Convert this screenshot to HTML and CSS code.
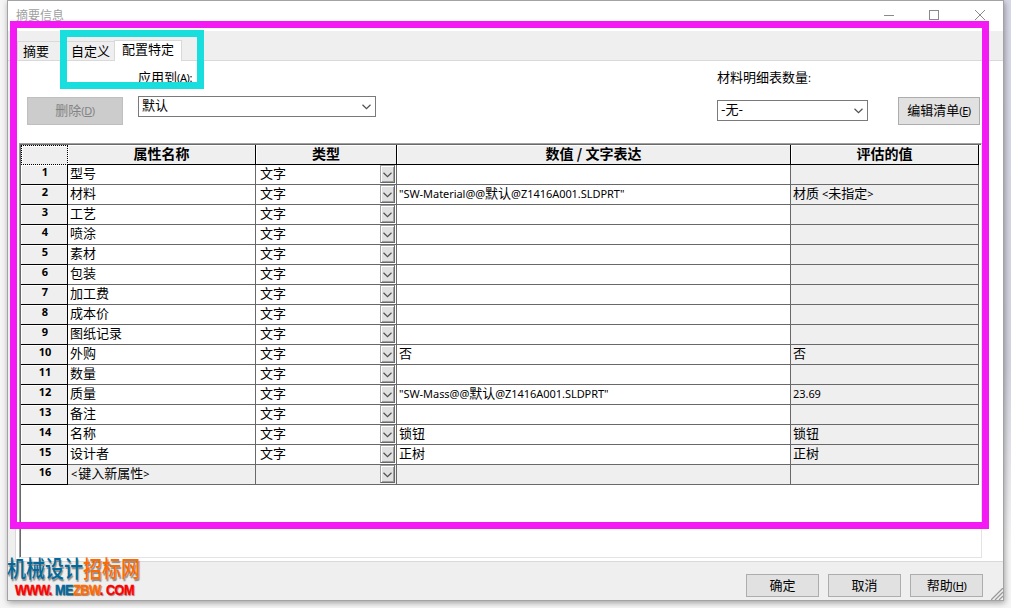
FILE: index.html
```html
<!DOCTYPE html>
<html lang="zh-CN">

<head>
  <meta charset="UTF-8">
  <title>摘要信息</title>
  <link rel="stylesheet" href="styles.css">
</head>

<body>
  <svg width="0" height="0" class="defs">
    <symbol id="chevron" viewBox="0 0 9 6">
      <path d="M0.5 0.8 L4.5 4.6 L8.5 0.8" fill="none" stroke="#505050" stroke-width="1.2" />
    </symbol>
  </svg>

  <div class="window">
    <div class="titlebar">
      <span class="title">摘要信息</span>
      <svg class="controls" width="104" height="12" viewBox="0 0 104 12" fill="none" stroke="#8a8a8a">
        <path d="M1 6.5 H11" />
        <rect x="46.5" y="1.5" width="9" height="9" />
        <path d="M92 1 L102 11 M102 1 L92 11" />
      </svg>
    </div>

    <div class="tabs">
      <div class="tab first">摘要</div>
      <div class="tab second">自定义</div>
      <div class="tab active">配置特定</div>
    </div>

    <div class="panel">
      <div class="toolbar">
        <button class="btn delete" disabled>删除<span class="key">(<u>D</u>)</span></button>
        <div class="field apply">
          <label>应用到<span class="key">(<u>A</u>):</span></label>
          <div class="select"><span>默认</span><svg width="9" height="6"><use href="#chevron" /></svg></div>
        </div>
        <div class="field bom">
          <label>材料明细表数量<span class="key">:</span></label>
          <div class="select"><span>-无-</span><svg width="9" height="6"><use href="#chevron" /></svg></div>
        </div>
        <button class="btn edit">编辑清单<span class="key">(<u>E</u>)</span></button>
      </div>

      <div class="sheet">
        <table>
          <colgroup>
            <col class="c-num">
            <col class="c-name">
            <col class="c-type">
            <col class="c-value">
            <col class="c-eval">
          </colgroup>
          <thead>
            <tr>
              <th class="corner"></th>
              <th>属性名称</th>
              <th>类型</th>
              <th>数值 / 文字表达</th>
              <th>评估的值</th>
            </tr>
          </thead>
          <tbody id="rows"></tbody>
        </table>
      </div>
    </div>

    <div class="footer">
      <button class="btn">确定</button>
      <button class="btn">取消</button>
      <button class="btn">帮助<span class="key">(<u>H</u>)</span></button>
      <svg class="grip" width="12" height="12" viewBox="0 0 12 12" stroke="#9a9a9a" stroke-width="1.3">
        <path d="M0 12 L12 0 M4 12 L12 4 M8 12 L12 8" />
      </svg>
    </div>
  </div>

  <div class="mark mark-page"></div>
  <div class="mark mark-tabs"></div>

  <div class="watermark">
    <div class="site"><span class="blue">机械设计</span><span class="orange">招标网</span></div>
    <div class="url"><span class="red">WWW. </span><span class="blue">ME</span><span class="orange">ZBW</span><span class="red">. COM</span></div>
  </div>

  <script>
    const rows = [
      ['型号', '', ''],
      ['材料', '<span class="lat">"SW-Material@@</span>默认<span class="lat">@Z1416A001.SLDPRT"</span>', '材质 <span class="lat">&lt;</span>未指定<span class="lat">&gt;</span>'],
      ['工艺', '', ''],
      ['喷涂', '', ''],
      ['素材', '', ''],
      ['包装', '', ''],
      ['加工费', '', ''],
      ['成本价', '', ''],
      ['图纸记录', '', ''],
      ['外购', '否', '否'],
      ['数量', '', ''],
      ['质量', '<span class="lat">"SW-Mass@@</span>默认<span class="lat">@Z1416A001.SLDPRT"</span>', '<span class="lat">23.69</span>'],
      ['备注', '', ''],
      ['名称', '锁钮', '锁钮'],
      ['设计者', '正树', '正树'],
      ['<span class="lat angle">&lt;</span>键入新属性<span class="lat">&gt;</span>', '', '']
    ];

    const drop = '<span class="drop"><svg width="9" height="6"><use href="#chevron" /></svg></span>';

    document.getElementById('rows').innerHTML = rows.map((r, i) => {
      const last = i === rows.length - 1;
      return `<tr class="${last ? 'new' : ''}">
        <th>${i + 1}</th>
        <td>${r[0]}</td>
        <td><div class="type"><span>${last ? '' : '文字'}</span>${drop}</div></td>
        <td>${r[1]}</td>
        <td class="eval">${r[2]}</td>
      </tr>`;
    }).join('');
  </script>
</body>

</html>
```
FILE: styles.css
```css
* {
  box-sizing: border-box;
}

body {
  margin: 0;
  height: 608px;
  overflow: hidden;
  background: linear-gradient(to bottom, #d9dae8 0, #d3d4df 60%, #f6f6f6 90%);
  font-family: "Noto Sans CJK SC", "Noto Sans", sans-serif;
  font-size: 13px;
  line-height: 19px;
  color: #000;
}

body::before {
  content: "";
  position: absolute;
  width: 7px;
  height: 608px;
  background: #f5f5f6;
}

.defs {
  position: absolute;
}

.window {
  position: relative;
  display: flex;
  flex-direction: column;
  width: 997px;
  height: 601px;
  margin-left: 7px;
  border: 1px solid #a3a3a5;
  background: #fff;
  box-shadow: 1px 2px 6px rgba(0, 0, 0, 0.35);
}

.titlebar {
  display: flex;
  justify-content: space-between;
  height: 30px;
  padding: 5px 16px 0 8px;
}

.title {
  font-size: 12px;
  line-height: 18px;
  color: #a0a0a0;
}

.controls {
  margin-top: 3px;
}

/* tabs */
.tabs {
  display: flex;
  align-items: flex-end;
  height: 30px;
  padding-left: 9px;
  background: #efefef;
  border-bottom: 1px solid #d9d9d9;
}

.tab {
  height: 19px;
  line-height: 17px;
  border: 1px solid #d9d9d9;
  border-bottom: 0;
}

.tab.first {
  width: 49px;
  padding-left: 5px;
}

.tab.second {
  width: 48px;
  padding-left: 5px;
  border-left: 0;
  border-right: 0;
}

.tab.active {
  width: 68px;
  height: 21px;
  margin-bottom: -1px;
  padding-left: 7px;
  line-height: 15px;
  background: #fff;
}

/* page */
.panel {
  flex: 1;
  padding-left: 11px;
  background: linear-gradient(to right, #efefef 7px, #d9d9d9 7px, #d9d9d9 8px, #fff 8px);
}

.toolbar {
  display: flex;
  align-items: flex-start;
  height: 82px;
  padding-left: 8px;
}

.btn {
  height: 23px;
  padding: 0 0 2px;
  border: 1px solid #adadad;
  background: #e1e1e1;
  font: inherit;
  color: #000;
}

.key {
  font-family: "Noto Sans", sans-serif;
  font-size: 11px;
  letter-spacing: -0.4px;
}

.toolbar .btn {
  height: 28px;
  margin-top: 36px;
}

.delete {
  width: 96px;
}

.btn:disabled {
  background: #ccc;
  border-color: #bfbfbf;
  color: #838383;
}

.edit {
  width: 82px;
  margin-left: 30px;
}

.field label {
  display: block;
  height: 35px;
  padding-top: 6px;
}

.apply {
  width: 238px;
  margin-left: 15px;
}

.bom {
  width: 151px;
  margin-left: 341px;
}

.bom label {
  height: 39px;
}

.select {
  display: flex;
  justify-content: space-between;
  height: 21px;
  padding: 0 4px 0 3px;
  border: 1px solid #7a7a7a;
  line-height: 15px;
}

.select svg {
  margin-top: 7px;
}

/* property sheet */
.sheet {
  width: 963px;
  height: 415px;
  border: 1px solid #e3e3e3;
  border-top-color: #a0a0a0;
  border-left-color: #a0a0a0;
  box-shadow: inset 1px 1px 0 #696969;
  padding: 1px 0 0 1px;
}

table {
  width: 958px;
  table-layout: fixed;
  border-collapse: separate;
  border-spacing: 0;
}

.c-num { width: 47px; }
.c-name { width: 188px; }
.c-type { width: 141px; }
.c-value { width: 394px; }
.c-eval { width: 188px; }

th,
td {
  height: 20px;
  padding: 0 0 0 2px;
  line-height: 15px;
  text-align: left;
  vertical-align: top;
  white-space: nowrap;
  border-right: 1px solid #696969;
  border-bottom: 1px solid #696969;
}

th {
  padding: 0;
  text-align: center;
  background: #efefef;
  border-color: #000;
  box-shadow: inset 1px 1px 0 #fff;
}

thead th {
  font-size: 14px;
  line-height: 17px;
}

tbody th {
  font-family: "Noto Sans", sans-serif;
  font-size: 11px;
  padding-left: 2px;
  line-height: 14px;
}

.corner {
  border: 1px dotted #000;
}

.lat {
  font-family: "Noto Sans", sans-serif;
  font-size: 11px;
  letter-spacing: -0.05px;
}

.angle {
  margin: 0 1px;
}

.eval,
.new td {
  background: #efefef;
}

.type {
  display: flex;
  justify-content: space-between;
  height: 19px;
  padding: 0 1px 0 2px;
}

.drop {
  display: flex;
  align-items: center;
  justify-content: center;
  width: 15px;
  height: 18px;
  padding-top: 2px;
  background: #e1e1e1;
  border: 1px solid #a0a0a0;
  border-right-color: #696969;
  border-bottom-color: #696969;
  box-shadow: inset 1px 1px 0 #fff, inset -1px -1px 0 #a0a0a0;
}

.footer {
  position: relative;
  display: flex;
  justify-content: flex-end;
  gap: 9px;
  height: 39px;
  padding: 12px 20px 0 0;
  background: #efefef;
  border-top: 1px solid #d9d9d9;
}

.footer .btn {
  width: 73px;
}

.grip {
  position: absolute;
  right: 0;
  bottom: 0;
}

/* highlight frames */
.mark {
  position: absolute;
  border: 7px solid #f31af3;
}

.mark-page {
  left: 10px;
  top: 21px;
  width: 979px;
  height: 508px;
}

.mark-tabs {
  left: 60px;
  top: 30px;
  width: 144px;
  height: 59px;
  border-color: #19dede;
}

.watermark {
  position: absolute;
  left: 7px;
  top: 557px;
  font-family: "Liberation Sans", "Noto Sans CJK SC", sans-serif;
  white-space: nowrap;
  text-shadow: 1px 1px 1px #888;
}

.site {
  height: 25px;
  font-size: 19px;
  font-weight: 500;
  line-height: 22px;
  transform: scaleY(1.2);
  transform-origin: top;
}

.url {
  margin: 0 0 0 8px;
  font-size: 15px;
  font-weight: bold;
  line-height: 16px;
  letter-spacing: -0.6px;
  transform: scaleX(0.85);
  transform-origin: left;
  -webkit-text-stroke: 0.4px;
}

.blue { color: #00699c; }
.orange { color: #ff6a00; }
.red { color: #f00; }
```
